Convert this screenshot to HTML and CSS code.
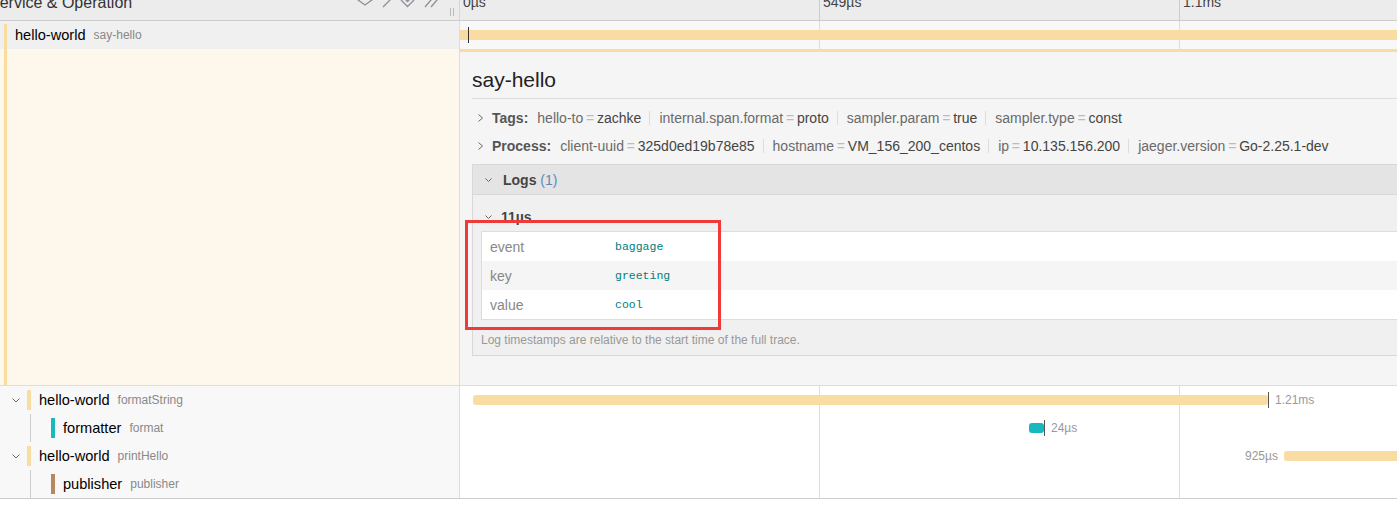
FILE: index.html
```html
<!DOCTYPE html>
<html>
<head>
<meta charset="utf-8">
<link rel="stylesheet" href="styles.css">
</head>
<body>
<div class="trace">
  <div class="hdr">
    <div class="hdr-left">
      <div class="hdr-title">Service &amp; Operation</div>
      <div class="hdr-icons">
        <svg class="hicon" width="22" height="16" viewBox="0 0 22 16"><polyline points="0,5 11,13 22,5" /></svg>
        <svg class="hicon" width="22" height="16" viewBox="0 0 22 16"><polyline points="7,1 14,8 7,15" /></svg>
        <svg class="hicon" width="22" height="16" viewBox="0 0 22 16"><polyline points="3,3 9.5,9.5 16,3" /><polyline points="3,8 9.5,14.5 16,8" /></svg>
        <svg class="hicon" width="22" height="16" viewBox="0 0 22 16"><polyline points="5,1 11,8 5,15" /><polyline points="11,1 17,8 11,15" /></svg>
      </div>
      <div class="resizer"></div>
    </div>
    <div class="hdr-ticks">
      <div class="tick t1"><span class="tick-label">0µs</span></div>
      <div class="tick t2"><span class="tick-label">549µs</span></div>
      <div class="tick t3"><span class="tick-label">1.1ms</span></div>
    </div>
  </div>

  <div class="row expanded">
    <div class="name">
      <div class="root-accent"></div>
      <span class="svc">hello-world</span><span class="op">say-hello</span>
    </div>
    <div class="view">
      <div class="bar yellow full"></div>
      <div class="logmark" style="left:8px"></div>
    </div>
  </div>

  <div class="detail-row">
    <div class="detail-left"><div class="detail-accent"></div></div>
    <div class="detail-right">
      <div class="detail-inner">
        <div class="detail-title">say-hello</div>
        <div class="kv-row first">
          <svg class="chev-r" width="5" height="8" viewBox="0 0 5 8"><polyline points="0.5,0.5 4.5,4 0.5,7.5" /></svg>
          <span class="kv-label">Tags:</span>
          <span class="kv-item"><span class="kv-key">hello-to</span><span class="kv-eq">=</span><span class="kv-val">zachke</span></span>
          <span class="kv-item"><span class="kv-key">internal.span.format</span><span class="kv-eq">=</span><span class="kv-val">proto</span></span>
          <span class="kv-item"><span class="kv-key">sampler.param</span><span class="kv-eq">=</span><span class="kv-val">true</span></span>
          <span class="kv-item last"><span class="kv-key">sampler.type</span><span class="kv-eq">=</span><span class="kv-val">const</span></span>
        </div>
        <div class="kv-row">
          <svg class="chev-r" width="5" height="8" viewBox="0 0 5 8"><polyline points="0.5,0.5 4.5,4 0.5,7.5" /></svg>
          <span class="kv-label">Process:</span>
          <span class="kv-item"><span class="kv-key">client-uuid</span><span class="kv-eq">=</span><span class="kv-val">325d0ed19b78e85</span></span>
          <span class="kv-item"><span class="kv-key">hostname</span><span class="kv-eq">=</span><span class="kv-val">VM_156_200_centos</span></span>
          <span class="kv-item"><span class="kv-key">ip</span><span class="kv-eq">=</span><span class="kv-val">10.135.156.200</span></span>
          <span class="kv-item last"><span class="kv-key">jaeger.version</span><span class="kv-eq">=</span><span class="kv-val">Go-2.25.1-dev</span></span>
        </div>
        <div class="logs">
          <div class="logs-head">
            <svg class="chev-d" width="7" height="4" viewBox="0 0 7 4"><polyline points="0.5,0.5 3.5,3.5 6.5,0.5" /></svg>
            <strong class="logs-title">Logs</strong>&nbsp;<span class="logs-count">(1)</span>
          </div>
          <div class="logs-body">
            <div class="log-head">
              <svg class="chev-d" width="7" height="4" viewBox="0 0 7 4"><polyline points="0.5,0.5 3.5,3.5 6.5,0.5" /></svg>
              <span class="log-time">11µs</span>
            </div>
            <div class="kv-table">
              <div class="kv-tr"><span class="kv-k">event</span><span class="kv-v">baggage</span></div>
              <div class="kv-tr"><span class="kv-k">key</span><span class="kv-v">greeting</span></div>
              <div class="kv-tr"><span class="kv-k">value</span><span class="kv-v">cool</span></div>
            </div>
            <div class="logs-note">Log timestamps are relative to the start time of the full trace.</div>
          </div>
        </div>
      </div>
      <div class="annot"></div>
    </div>
  </div>

  <div class="row">
    <div class="name">
      <svg class="chev" width="8" height="5" viewBox="0 0 8 5"><polyline points="0.5,0.5 4,4 7.5,0.5" /></svg>
      <div class="svc-bar yellow"></div>
      <span class="svc">hello-world</span><span class="op">formatString</span>
    </div>
    <div class="view">
      <div class="bar yellow" style="margin-left:13px;width:795px"></div>
      <div class="endtick"></div>
      <span class="dur">1.21ms</span>
    </div>
  </div>

  <div class="row">
    <div class="name child">
      <div class="guide"></div>
      <div class="svc-bar teal"></div>
      <span class="svc">formatter</span><span class="op">format</span>
    </div>
    <div class="view">
      <div class="bar teal" style="margin-left:569px;width:15px"></div>
      <div class="endtick"></div>
      <span class="dur">24µs</span>
    </div>
  </div>

  <div class="row">
    <div class="name">
      <svg class="chev" width="8" height="5" viewBox="0 0 8 5"><polyline points="0.5,0.5 4,4 7.5,0.5" /></svg>
      <div class="svc-bar yellow"></div>
      <span class="svc">hello-world</span><span class="op">printHello</span>
    </div>
    <div class="view">
      <span class="dur before" style="margin-left:785px">925µs</span>
      <div class="bar yellow" style="width:200px"></div>
    </div>
  </div>

  <div class="row">
    <div class="name child">
      <div class="guide"></div>
      <div class="svc-bar brown"></div>
      <span class="svc">publisher</span><span class="op">publisher</span>
    </div>
    <div class="view"></div>
  </div>
</div>
</body>
</html>
```

FILE: styles.css
```css
* { box-sizing: border-box; }
html, body { margin: 0; padding: 0; background: #fff; }
body {
  width: 1397px;
  height: 513px;
  overflow: hidden;
  font-family: "Liberation Sans", Arial, sans-serif;
  color: #000;
}

.trace { border-bottom: 1px solid #ccc; }

/* header */
.hdr {
  display: flex;
  height: 21px;
  border-bottom: 1px solid #ccc;
  background: #ececec;
  overflow: hidden;
}
.hdr-left {
  width: 460px;
  flex-shrink: 0;
  display: flex;
  align-items: flex-start;
  border-right: 1px solid #d6d6d6;
}
.hdr-title {
  font-size: 16px;
  line-height: 20px;
  margin-top: -7px;
  margin-left: -11px;
  color: #333;
  white-space: nowrap;
}
.hdr-icons { display: flex; margin-left: auto; }
.hicon { margin-top: -8px; flex-shrink: 0; }
.hicon polyline { fill: none; stroke: #8d8d9c; stroke-width: 1.3; }
.resizer {
  width: 4px;
  height: 8px;
  margin-top: 8px;
  margin-left: 8px;
  margin-right: 5px;
  border-left: 1px solid #bbb;
  border-right: 1px solid #bbb;
  flex-shrink: 0;
}
.hdr-ticks { flex: 1; display: flex; }
.tick { padding-left: 3px; height: 20px; }
.t1 { width: 359px; }
.t2 { width: 360px; border-left: 1px solid #ccc; }
.t3 { flex: 1; border-left: 1px solid #ccc; }
.tick-label {
  display: block;
  font-size: 14px;
  line-height: 20px;
  margin-top: -8px;
  color: #444;
}

/* rows */
.row { display: flex; height: 28px; }
.name {
  width: 460px;
  flex-shrink: 0;
  display: flex;
  align-items: center;
  background: #f8f8f8;
  border-right: 1px solid #ddd;
  padding-left: 12px;
  white-space: nowrap;
}
.name.child { padding-left: 30px; }
.row.expanded .name { background: #f0f0f0; padding-left: 4px; }
.root-accent {
  width: 3px;
  align-self: stretch;
  margin-top: 3px;
  background: #f8dca1;
}
.chev { flex-shrink: 0; margin-right: 7px; }
.chev polyline, .chev-r polyline, .chev-d polyline { fill: none; stroke: #666; stroke-width: 1; }
.guide { width: 1px; align-self: stretch; background: #ccc; margin-right: 20px; }
.svc-bar { width: 4px; height: 20px; flex-shrink: 0; }
.svc-bar.yellow { background: #f8dca1; }
.svc-bar.teal { background: #17b8be; }
.svc-bar.brown { background: #b7885e; }
.svc { font-size: 14.6px; margin-left: 8px; color: #000; }
.op { font-size: 12px; margin-left: 8px; color: #888; }

.view {
  flex: 1;
  min-width: 0;
  display: flex;
  align-items: center;
  overflow: hidden;
  position: relative;
  white-space: nowrap;
  background-color: #fff;
  background-image: linear-gradient(to right,
    transparent 359px, #ddd 359px, #ddd 360px, transparent 360px,
    transparent 719px, #ddd 719px, #ddd 720px, transparent 720px);
}
.row.expanded .view { background-color: #f8f8f8; }
.bar { height: 10px; border-radius: 3px; flex-shrink: 0; }
.bar.full { flex: 1; border-radius: 0; }
.bar.yellow { background: #f8dca1; }
.bar.teal { background: #17b8be; }
.logmark {
  position: absolute;
  top: 6px;
  width: 1px;
  height: 16px;
  background: #333;
}
.endtick { width: 1px; height: 16px; background: #555; flex-shrink: 0; }
.dur { font-size: 12px; color: #999; margin-left: 6px; }
.dur.before { margin-right: 6px; }

/* detail */
.detail-row { display: flex; border-bottom: 1px solid #ddd; }
.detail-left {
  width: 460px;
  flex-shrink: 0;
  background: #fef7eb;
  border-right: 1px solid #ddd;
  padding-left: 4px;
  display: flex;
}
.detail-accent { width: 3px; background: #f8dca1; }
.detail-right {
  flex: 1;
  min-width: 0;
  overflow: hidden;
  position: relative;
  background: #f5f5f5;
  border-top: 3px solid #f8dca1;
  padding: 0 0 29px 12px;
}
.detail-inner { width: 1000px; }
.detail-title {
  font-size: 21px;
  line-height: 26px;
  margin-top: 15px;
  padding-bottom: 5px;
  border-bottom: 1px solid #ddd;
  color: #222;
}
.kv-row {
  display: flex;
  align-items: center;
  height: 28px;
  padding-left: 6px;
  font-size: 14px;
  white-space: nowrap;
}
.kv-row.first { margin-top: 5px; }
.chev-r { flex-shrink: 0; margin-right: 9px; }
.kv-label { font-weight: bold; color: #555; margin-right: 9px; }
.kv-item {
  line-height: 14px;
  padding-right: 8px;
  margin-right: 9px;
  border-right: 1px solid #ddd;
}
.kv-item.last { border-right: none; }
.kv-key { color: #6a6a6a; }
.kv-eq { color: #bbb; padding: 0 2.8px; }
.kv-val { color: #444; }

.logs { margin-top: 4px; border: 1px solid #d8d8d8; }
.logs-head {
  height: 29px;
  display: flex;
  align-items: center;
  padding-left: 12px;
  background: #e4e4e4;
  font-size: 14px;
}
.chev-d { flex-shrink: 0; margin-right: 11px; }
.logs-title { color: #444; }
.logs-count { color: #5a8bb8; }
.logs-body {
  border-top: 1px solid #d8d8d8;
  background: #f0f0f0;
  padding: 8px 0 5px 8px;
}
.log-head {
  height: 28px;
  display: flex;
  align-items: center;
  padding-left: 4px;
  font-size: 14px;
}
.log-head .chev-d { margin-right: 9px; }
.log-time { font-weight: bold; color: #444; }
.kv-table { border: 1px solid #ddd; background: #fff; }
.kv-tr { display: flex; align-items: center; height: 29px; }
.kv-tr:nth-child(even) { background: #f5f5f5; }
.kv-k { width: 125px; padding-left: 8px; font-size: 14px; color: #888; }
.kv-v {
  padding-left: 8px;
  font-family: "Liberation Mono", "Courier New", monospace;
  font-size: 11.5px;
  color: #007f7f;
}
.logs-note {
  margin-top: 10px;
  font-size: 12px;
  line-height: 20px;
  color: #999;
}

/* screenshot annotation */
.annot {
  position: absolute;
  left: 5px;
  top: 168px;
  width: 256px;
  height: 110px;
  border: 3px solid #ef3a3a;
}
```
